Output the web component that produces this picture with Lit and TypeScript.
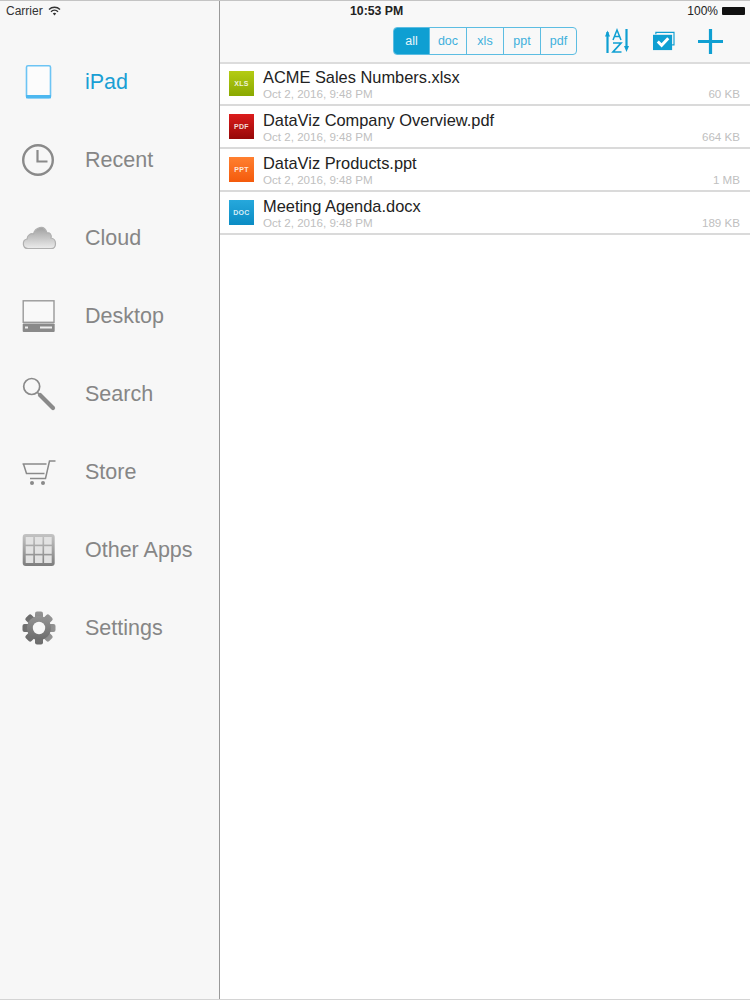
import { LitElement, html, css, svg } from "lit";
import { customElement } from "lit/decorators.js";

const GREY = "#8a8a8a";
const BLUE = "#0f9fd2";

const icons: Record<string, unknown> = {
  iPad: svg`<rect x="4.500" y="0.800" width="24" height="32" rx="1.500" fill="#fcfcfc" stroke="#6cc4f4" stroke-width="1.600"/><rect x="4" y="30" width="25" height="3.300" fill="#4db8f0"/>`,
  Recent: svg`<circle cx="16" cy="17" r="14.800" fill="none" stroke="${GREY}" stroke-width="2.400"/><path d="M15.500 7v11.500h10" fill="none" stroke="${GREY}" stroke-width="2.200"/>`,
  Cloud: svg`<defs><linearGradient id="c" x1="0" y1="0" x2="0" y2="1"><stop offset="0" stop-color="#a0a0a0"/><stop offset="1" stop-color="#ececec"/></linearGradient></defs><path d="M6 27.500C0 27.500 0 19 5 18C5 14 9 12 11.500 13C13 7 22 2.500 25 12C28 11 30 14 29 17C35 18 35 27.500 29 27.500Z" fill="url(#c)" stroke="#b0b0b0" stroke-width="1.200"/>`,
  Desktop: svg`<rect x="1.200" y="1.800" width="30.800" height="21.500" fill="#f9f9f9" stroke="#999" stroke-width="1.400"/><rect x="0.700" y="24.500" width="32" height="8.500" rx="1" fill="${GREY}"/><rect x="3" y="27.500" width="3" height="2" fill="#eee"/><rect x="18" y="27.500" width="12" height="2" fill="#eee"/>`,
  Search: svg`<circle cx="9.700" cy="9.500" r="8" fill="none" stroke="${GREY}" stroke-width="1.700"/><path d="M15.500 15.500l3 3" stroke="${GREY}" stroke-width="1.700"/><path d="M18 18l13 13" stroke="${GREY}" stroke-width="4.200" stroke-linecap="round"/>`,
  Store: svg`<path d="M33.500 6h-6l-4 17.500H8" fill="none" stroke="${GREY}" stroke-width="1.500"/><path d="M0.500 9h24M1.500 9l3 9.500h18" fill="none" stroke="${GREY}" stroke-width="1.500"/><circle cx="10" cy="28" r="2" fill="${GREY}"/><circle cx="21" cy="28" r="2" fill="${GREY}"/>`,
  "Other Apps": svg`<defs><linearGradient id="a" x1="0" y1="0" x2="0" y2="1"><stop offset="0" stop-color="#c4c4c4"/><stop offset="1" stop-color="#7d7d7d"/></linearGradient></defs><rect x="0.700" y="1" width="32" height="32" rx="3" fill="url(#a)"/>${[0, 1, 2].flatMap((r) =>
    [0, 1, 2].map((c) => svg`<rect x="${3.7 + c * 9.2}" y="${4 + r * 9.2}" width="7.600" height="7.600" fill="#e2e2e2"/>`),
  )}`,
  Settings: svg`<defs><linearGradient id="s" x1="0" y1="0" x2="0" y2="1"><stop offset="0" stop-color="#949494"/><stop offset="1" stop-color="#6c6c6c"/></linearGradient></defs>${[0, 45, 90, 135].map(
    (a) => svg`<rect x="13" y="0.500" width="8" height="33" rx="2" fill="url(#s)" transform="rotate(${a} 17 17)"/>`,
  )}<circle cx="17" cy="17" r="12" fill="url(#s)"/><circle cx="17" cy="17" r="6.200" fill="#f7f7f7"/>`,
};

const NAV = ["iPad", "Recent", "Cloud", "Desktop", "Search", "Store", "Other Apps", "Settings"];

const FILES = [
  { name: "ACME Sales Numbers.xlsx", tag: "XLS", kind: "xls", size: "60 KB" },
  { name: "DataViz Company Overview.pdf", tag: "PDF", kind: "pdf", size: "664 KB" },
  { name: "DataViz Products.ppt", tag: "PPT", kind: "ppt", size: "1 MB" },
  { name: "Meeting Agenda.docx", tag: "DOC", kind: "doc", size: "189 KB" },
];

@customElement("app-root")
export class AppRoot extends LitElement {
  static styles = css`
    :host {
      display: block;
      width: 750px;
      height: 1000px;
      font-family: "Liberation Sans", Arial, sans-serif;
      background: #fff;
      overflow: hidden;
    }
    .page {
      display: flex;
      height: 1000px;
      box-sizing: border-box;
      border-top: 1px solid #c4c4c4;
      border-bottom: 1px solid #d4d4d4;
    }
    .side {
      width: 220px;
      flex: none;
      box-sizing: border-box;
      background: #f7f7f7;
      border-right: 1px solid #999;
    }
    .carrier {
      height: 19px;
      display: flex;
      align-items: center;
      gap: 5px;
      padding-left: 6px;
      font-size: 12px;
      color: #333;
    }
    .nav {
      padding-top: 23px;
    }
    .nav-row {
      height: 78px;
      display: flex;
      align-items: center;
      padding-left: 22px;
      gap: 29px;
      font-size: 21.500px;
      color: #868686;
    }
    .nav-row.on {
      color: #1a9fd4;
    }
    .nav-row svg {
      width: 34px;
      height: 34px;
      flex: none;
      overflow: visible;
    }
    .main {
      flex: 1;
      min-width: 0;
    }
    .head {
      height: 63px;
      box-sizing: border-box;
      background: #f8f8f8;
      border-bottom: 2px solid #dcdcdc;
    }
    .status {
      height: 19px;
      display: flex;
      align-items: center;
      padding-left: 130px;
      font-size: 12px;
      color: #222;
    }
    .time {
      font-weight: bold;
      font-size: 12.300px;
    }
    .batt {
      margin-left: auto;
      display: flex;
      align-items: center;
      gap: 4px;
      padding-right: 3px;
    }
    .battery {
      width: 23px;
      height: 8px;
      background: #111;
      border-radius: 1px;
      margin-right: 2px;
    }
    .tools {
      display: flex;
      align-items: center;
      padding: 7px 0 0 173px;
    }
    .seg {
      display: flex;
      width: 184px;
      height: 28px;
      box-sizing: border-box;
      border: 1px solid #5cbde2;
      border-radius: 4px;
      overflow: hidden;
      font-size: 12.500px;
      color: #3fb0dc;
    }
    .seg span {
      width: 37px;
      box-sizing: border-box;
      display: flex;
      align-items: center;
      justify-content: center;
      border-left: 1px solid #5cbde2;
    }
    .seg span:first-child {
      width: 35px;
      border-left: 0;
    }
    .seg span:last-child {
      flex: 1;
    }
    .seg .sel {
      background: #0f9fd2;
      color: #e8f6fb;
    }
    .acts {
      display: flex;
      align-items: center;
      gap: 23px;
      margin-left: 28px;
    }
    .list {
      margin-top: -1px;
    }
    .row {
      height: 43px;
      box-sizing: border-box;
      border-bottom: 2px solid #dadada;
      display: flex;
      align-items: flex-start;
      padding: 0 10px 0 9px;
      gap: 9px;
    }
    .tag {
      width: 25px;
      height: 25px;
      margin-top: 8px;
      flex: none;
      display: flex;
      align-items: center;
      justify-content: center;
      font-size: 7px;
      font-weight: bold;
      letter-spacing: 0.3px;
      color: rgba(255, 255, 255, 0.85);
    }
    .xls { background: linear-gradient(#b4cc14, #8aa800); }
    .pdf { background: linear-gradient(#dc1c1c, #960808); }
    .ppt { background: linear-gradient(#ff8030, #f45a0c); }
    .doc { background: linear-gradient(#26a8dc, #0b8cc4); }
    .info {
      flex: 1;
      min-width: 0;
      padding-top: 5px;
    }
    .name {
      font-size: 16.400px;
      line-height: 19px;
      color: #222;
    }
    .meta {
      display: flex;
      justify-content: space-between;
      font-size: 11.600px;
      line-height: 13px;
      color: #c0c0c0;
    }
  `;

  render() {
    return html`<div class="page">
      <aside class="side">
        <div class="carrier">
          Carrier
          <svg width="13" height="10" viewBox="0 0 13 10">
            <path d="M1 3.500a8 8 0 0 1 11 0M3 5.700a5 5 0 0 1 7 0" fill="none" stroke="#333" stroke-width="1.400"/>
            <path d="M4.800 7.500a2.500 2.500 0 0 1 3.400 0L6.500 9.500z" fill="#333"/>
          </svg>
        </div>
        <nav class="nav">
          ${NAV.map(
            (n, i) => html`<div class="nav-row ${i === 0 ? "on" : ""}">
              <svg viewBox="0 0 34 34">${icons[n]}</svg>${n}
            </div>`,
          )}
        </nav>
      </aside>
      <main class="main">
        <header class="head">
          <div class="status">
            <span class="time">10:53 PM</span>
            <span class="batt">100%<span class="battery"></span></span>
          </div>
          <div class="tools">
            <div class="seg">
              <span class="sel">all</span><span>doc</span><span>xls</span><span>ppt</span><span>pdf</span>
            </div>
            <div class="acts">
              <svg width="24" height="26" viewBox="0 0 24 26" fill="none" stroke="${BLUE}">
                <path d="M2.500 25V4" stroke-width="2.200"/>
                <path d="M0 8.500l2.500-6 2.500 6z" fill="${BLUE}" stroke="none"/>
                <path d="M21.500 1v19" stroke-width="2.200"/>
                <path d="M19 18l2.500 6 2.500-6z" fill="${BLUE}" stroke="none"/>
                <path d="M8 12l4-10 4 10M9.500 8.500h5" stroke-width="1.500"/>
                <path d="M8 15h8l-8 9h8.500" stroke-width="1.700"/>
              </svg>
              <svg width="23" height="21" viewBox="0 0 24 22">
                <path d="M4 3.500V1.500h19v13h-2" fill="none" stroke="${BLUE}" stroke-width="1.200"/>
                <rect x="1" y="4" width="20" height="16" fill="${BLUE}"/>
                <path d="M6 11l4 4 7-7.500" fill="none" stroke="#fff" stroke-width="3"/>
              </svg>
              <svg width="25" height="25" viewBox="0 0 25 25">
                <path d="M12.500 0v25M0 12.500h25" stroke="${BLUE}" stroke-width="3.200"/>
              </svg>
            </div>
          </div>
        </header>
        <div class="list">
          ${FILES.map(
            (f) => html`<div class="row">
              <div class="tag ${f.kind}">${f.tag}</div>
              <div class="info">
                <div class="name">${f.name}</div>
                <div class="meta"><span>Oct 2, 2016, 9:48 PM</span><span>${f.size}</span></div>
              </div>
            </div>`,
          )}
        </div>
      </main>
    </div>`;
  }
}
